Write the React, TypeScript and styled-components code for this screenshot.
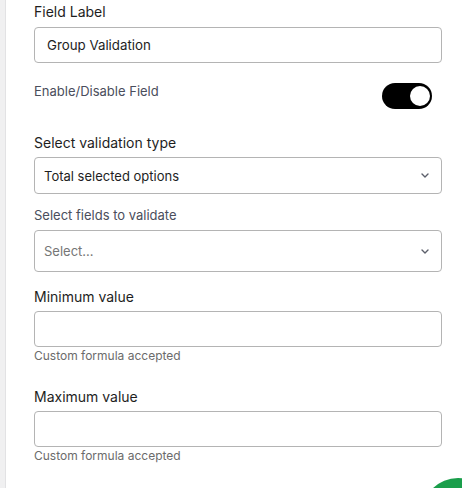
import { FC } from "react";
import styled, { createGlobalStyle } from "styled-components";

const GlobalStyle = createGlobalStyle`
    html, body {
        margin: 0;
        padding: 0;
        background: #ffffff;
    }
    body {
        font-family: Inter, "Noto Sans", sans-serif;
        color: #1e1e1e;
    }
`;

const Page = styled.div`
    display: flex;
    min-height: 100vh;
    position: relative;
    overflow: hidden;
`;

const SideStrip = styled.div`
    width: 5px;
    flex-shrink: 0;
    background: #f0f0f1;
    border-right: 1px solid #e2e2e4;
`;

const Panel = styled.div`
    flex: 1;
    display: flex;
    flex-direction: column;
    padding: 2px 20px 0 28px;
`;

const Label = styled.label<{ $top?: number; $small?: boolean }>`
    display: block;
    margin-top: ${({ $top }) => $top ?? 0}px;
    font-size: ${({ $small }) => ($small ? 13 : 14)}px;
    line-height: ${({ $small }) => ($small ? 18 : 20)}px;
    color: ${({ $small }) => ($small ? "#4a4e5c" : "#1e1e1e")};
`;

const TextInput = styled.input<{ $gap?: number }>`
    box-sizing: border-box;
    width: 100%;
    height: 36px;
    margin-top: ${({ $gap }) => $gap ?? 4}px;
    padding: 0 12px;
    border: 1px solid #b4b4b4;
    border-radius: 4px;
    background: #fff;
    font-family: inherit;
    font-size: 13.3px;
    color: #1e1e1e;
    outline: none;
`;

const SelectBox = styled.div<{ $height: number; $gap: number }>`
    box-sizing: border-box;
    display: flex;
    align-items: center;
    justify-content: space-between;
    height: ${({ $height }) => $height}px;
    margin-top: ${({ $gap }) => $gap}px;
    padding: 0 12px 0 9px;
    border: 1px solid #b4b4b4;
    border-radius: 4px;
    font-size: 13px;
`;

const SelectText = styled.span<{ $placeholder?: boolean }>`
    color: ${({ $placeholder }) => ($placeholder ? "#767676" : "#1e1e1e")};
`;

const Helper = styled.div`
    margin-top: 1px;
    font-size: 12px;
    line-height: 15px;
    color: #6b6b6b;
`;

const ToggleRow = styled.div`
    display: flex;
    align-items: flex-start;
    justify-content: space-between;
    margin-top: 19px;
    padding-right: 10px;
`;

const ToggleTrack = styled.div<{ $on: boolean }>`
    position: relative;
    width: 50px;
    height: 26px;
    margin-top: 1px;
    border-radius: 13px;
    background: ${({ $on }) => ($on ? "#000" : "#ccc")};
`;

const ToggleKnob = styled.span<{ $on: boolean }>`
    position: absolute;
    top: 3px;
    ${({ $on }) => ($on ? "right: 2px;" : "left: 2px;")}
    width: 20px;
    height: 20px;
    border-radius: 50%;
    background: #fff;
`;

const FloatingButton = styled.div`
    position: absolute;
    left: 422px;
    top: 478px;
    width: 72px;
    height: 72px;
    border-radius: 50%;
    background: #1a9e4b;
`;

const Chevron: FC = () => (
    <svg width="8" height="5" viewBox="0 0 8 5" fill="none">
        <path
            d="M1 1l3 3 3-3"
            stroke="#5c5f6b"
            strokeWidth="1.4"
            strokeLinecap="round"
            strokeLinejoin="round"
        />
    </svg>
);

const Toggle: FC<{ on: boolean }> = ({ on }) => (
    <ToggleTrack $on={on}>
        <ToggleKnob $on={on} />
    </ToggleTrack>
);

export default function App() {
    return (
        <Page>
            <GlobalStyle />
            <SideStrip />
            <Panel>
                <Label>Field Label</Label>
                <TextInput $gap={5} defaultValue="Group Validation" />

                <ToggleRow>
                    <Label $small>Enable/Disable Field</Label>
                    <Toggle on />
                </ToggleRow>

                <Label $top={24}>Select validation type</Label>
                <SelectBox $height={37} $gap={4}>
                    <SelectText>Total selected options</SelectText>
                    <Chevron />
                </SelectBox>

                <Label $small $top={12}>
                    Select fields to validate
                </Label>
                <SelectBox $height={42} $gap={6}>
                    <SelectText $placeholder>Select...</SelectText>
                    <Chevron />
                </SelectBox>

                <Label $top={15}>Minimum value</Label>
                <TextInput />
                <Helper>Custom formula accepted</Helper>

                <Label $top={24}>Maximum value</Label>
                <TextInput />
                <Helper>Custom formula accepted</Helper>
            </Panel>
            <FloatingButton />
        </Page>
    );
}
